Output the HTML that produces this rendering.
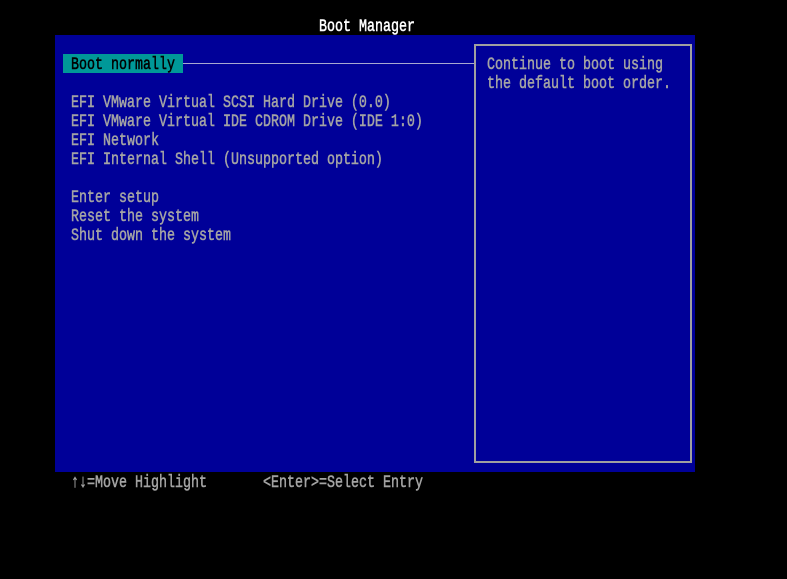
<!DOCTYPE html>
<html>
<head>
<meta charset="utf-8">
<style>
html,body{margin:0;padding:0;background:#000;width:787px;height:579px;overflow:hidden}
.a{position:absolute}
.t{position:absolute;font-family:"Liberation Mono",monospace;font-size:13.33px;line-height:19px;height:19px;white-space:pre;color:#a4a4a4;transform:scaleY(1.35);transform-origin:0 50%;-webkit-text-stroke:0.4px currentColor}
</style>
</head>
<body>
<div class="a" style="left:55px;top:35px;width:640px;height:437px;background:#000098"></div>
<div class="a" style="left:63px;top:54px;width:120px;height:19px;background:#009898"></div>
<div class="a" style="left:183px;top:63px;width:291px;height:1px;background:#a8a8d0"></div>
<div class="a" style="left:474px;top:44px;width:214px;height:415px;border:2px solid #a0a0a0"></div>
<div class="t" style="left:319px;top:18px;color:#fff">Boot Manager</div>
<div class="t" style="left:71px;top:56px;color:#000">Boot normally</div>
<div class="t" style="left:71px;top:94px">EFI VMware Virtual SCSI Hard Drive (0.0)</div>
<div class="t" style="left:71px;top:113px">EFI VMware Virtual IDE CDROM Drive (IDE 1:0)</div>
<div class="t" style="left:71px;top:132px">EFI Network</div>
<div class="t" style="left:71px;top:151px">EFI Internal Shell (Unsupported option)</div>
<div class="t" style="left:71px;top:189px">Enter setup</div>
<div class="t" style="left:71px;top:208px">Reset the system</div>
<div class="t" style="left:71px;top:227px">Shut down the system</div>
<div class="t" style="left:487px;top:56px">Continue to boot using</div>
<div class="t" style="left:487px;top:75px">the default boot order.</div>
<div class="t" style="left:71px;top:474px">↑↓=Move Highlight</div>
<div class="t" style="left:263px;top:474px">&lt;Enter&gt;=Select Entry</div>
</body>
</html>
